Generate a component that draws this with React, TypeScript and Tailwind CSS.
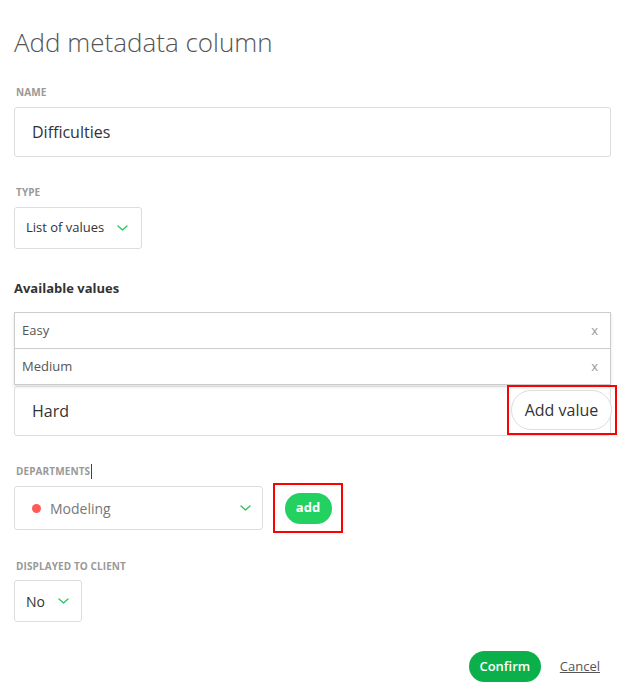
import React from "react";

const Chevron = ({ className = "" }: { className?: string }) => (
  <svg width="11" height="6" viewBox="0 0 11 6" className={className} fill="none">
    <path d="M1 1 L5.5 5 L10 1" stroke="#22c55e" strokeWidth="1.3" strokeLinecap="round" strokeLinejoin="round" />
  </svg>
);

const Label = ({ children }: { children: React.ReactNode }) => (
  <div className="text-[10px] font-bold uppercase leading-[12px] tracking-[0.1px] text-[#999]">{children}</div>
);

export default function App() {
  return (
    <div
      className="w-[631px] h-[699px] bg-white overflow-hidden text-[#333]"
      style={{ fontFamily: '"Open Sans", "Noto Sans", sans-serif' }}
    >
      <div className="pl-[14px] pr-[20px]">
        <h1 className="pt-[24px] text-[26px] font-light leading-[36px] text-[#555]">Add metadata column</h1>

        <div className="mt-[26px] pl-[2px]">
          <Label>NAME</Label>
        </div>
        <div className="mt-[9px] h-[50px] border border-[#ddd] rounded-[3px] flex items-center pl-[17px] text-[16px] text-[#333]">
          Difficulties
        </div>

        <div className="mt-[29px] pl-[2px]">
          <Label>TYPE</Label>
        </div>
        <div className="mt-[9px] w-[128px] h-[42px] border border-[#ddd] rounded-[3px] flex items-center pl-[11px] gap-[13px] text-[13px] text-[#333]">
          <span>List of values</span>
          <Chevron />
        </div>

        <div className="mt-[31px] text-[13px] font-bold leading-[16px] text-[#333]">Available values</div>

        <div className="mt-[16px] shadow-[0_2px_3px_rgba(0,0,0,0.12)]">
          <div className="h-[37px] border border-[#ccc] flex items-center justify-between pl-[7px] pr-[12px] text-[13px] text-[#555]">
            <span>Easy</span>
            <span className="text-[#999]">x</span>
          </div>
          <div className="h-[36px] border border-t-0 border-[#ccc] flex items-center justify-between pl-[7px] pr-[12px] text-[13px] text-[#555]">
            <span>Medium</span>
            <span className="text-[#999]">x</span>
          </div>
        </div>

        <div className="mt-[1px] relative h-[50px] border border-[#ddd] rounded-[3px] flex items-center pl-[17px] text-[16px] text-[#333]">
          <span>Hard</span>
          <div className="absolute right-[-7px] top-[-2px] w-[110px] h-[50px] border-2 border-[#ff0000] flex items-center justify-end pr-[3px]">
            <div className="w-[101px] h-[40px] rounded-full border border-[#ddd] bg-white flex items-center justify-center text-[16px] text-[#333]">
              Add value
            </div>
          </div>
        </div>

        <div className="mt-[29px] pl-[2px] h-[12px] flex items-center">
          <Label>DEPARTMENTS</Label>
          <span className="ml-[1px] w-px h-[15px] shrink-0 bg-[#444]" />
        </div>
        <div className="mt-[6px] flex items-center">
          <div className="w-[249px] h-[44px] border border-[#ddd] rounded-[3px] flex items-center pl-[17px] pr-[11px]">
            <span className="w-[9px] h-[9px] rounded-full bg-[#ff5a5a]" />
            <span className="ml-[9px] text-[14px] text-[#777]">Modeling</span>
            <span className="ml-auto">
              <Chevron />
            </span>
          </div>
          <div className="ml-[10px] w-[70px] h-[50px] border-2 border-[#ff0000] flex items-center justify-center">
            <div className="w-[47px] h-[31px] rounded-full bg-[#22d160] text-white text-[13px] font-bold flex items-center justify-center">
              add
            </div>
          </div>
        </div>

        <div className="mt-[27px] pl-[2px]">
          <Label>DISPLAYED TO CLIENT</Label>
        </div>
        <div className="mt-[8px] w-[68px] h-[42px] border border-[#ddd] rounded-[3px] flex items-center pl-[11px] gap-[13px] text-[14px] text-[#333]">
          <span>No</span>
          <Chevron />
        </div>

        <div className="mt-[29px] flex items-center justify-end pr-[11px] gap-[19px]">
          <div className="w-[72px] h-[31px] rounded-full bg-[#0bb04b] text-white text-[13px] font-semibold flex items-center justify-center">
            Confirm
          </div>
          <span className="text-[13px] text-[#555] underline">Cancel</span>
        </div>
      </div>
    </div>
  );
}
